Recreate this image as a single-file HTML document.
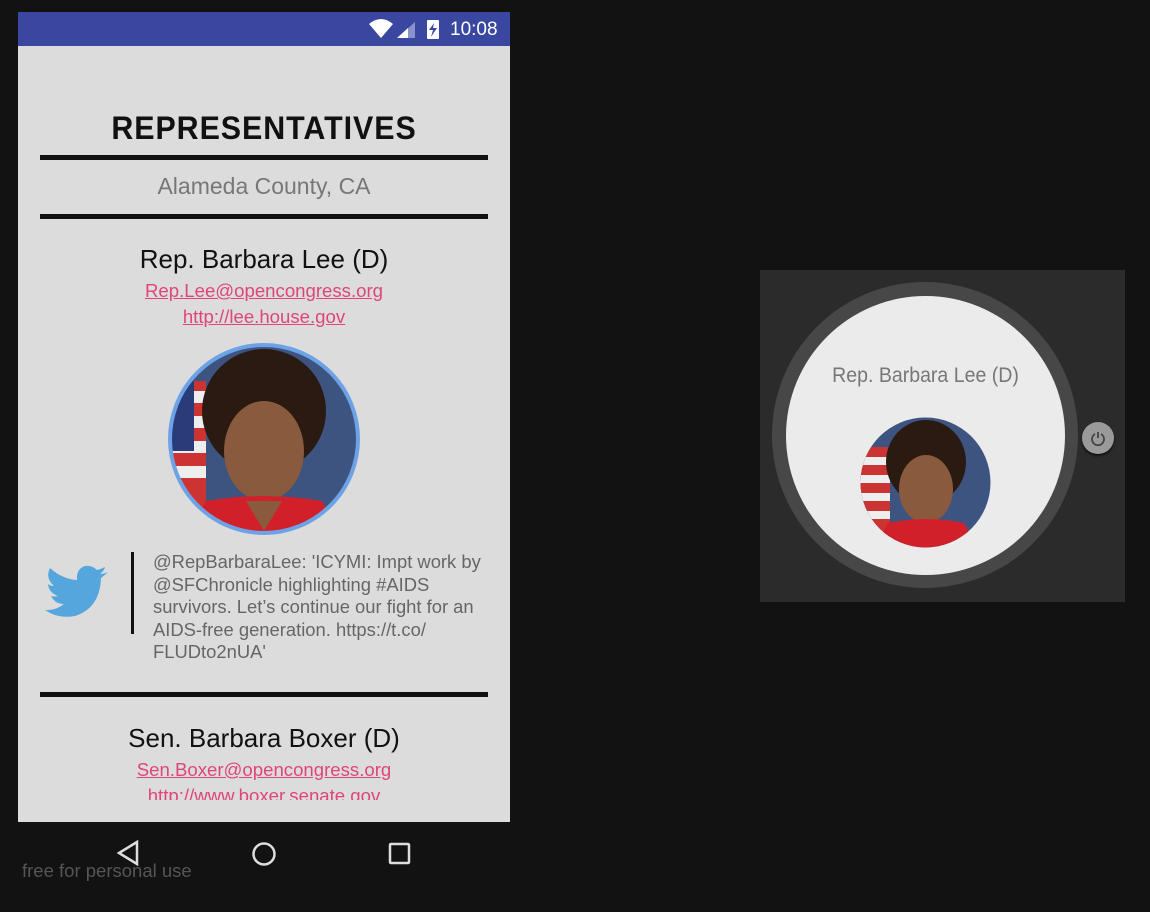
<!DOCTYPE html>
<html><head><meta charset="utf-8"><style>
body{margin:0;width:1150px;height:912px;background:#121212;position:relative;overflow:hidden;font-family:"Liberation Sans",sans-serif}
.a{position:absolute}
#scr{left:18px;top:12px;width:492px;height:810px;background:#dcdcdc;overflow:hidden}
#sb{left:0;top:0;width:492px;height:34px;background:#3a47a0}
.c{left:0;width:492px;text-align:center}
.rule{left:22px;width:448px;height:5px;background:#111}
.lnk{color:#e0457a;text-decoration:underline;font-size:18.6px}
</style></head><body>
<div id="scr" class="a">
 <div id="sb" class="a">
  <svg class="a" style="left:350px;top:6px" width="80" height="24"><path d="M1 6 Q13 -4 25 6 L13 20Z" fill="#fff"/><path d="M29 20 L47 4 L47 20Z" fill="#8a92cc"/><path d="M29 20 L40 10 L40 20Z" fill="#fff"/><rect x="59" y="2" width="12" height="19" rx="1" fill="#fff"/><path d="M66 5 L61 12 L65 12 L63 19 L69 10 L65 10Z" fill="#3a47a0"/></svg>
  <div class="a" style="left:432px;top:7px;color:#fff;font-size:19px">10:08</div>
 </div>
 <div class="a c" style="top:98px;font-size:32px;font-weight:bold;letter-spacing:1px;color:#111;transform:scaleX(0.95)">REPRESENTATIVES</div>
 <div class="a rule" style="top:143px"></div>
 <div class="a c" style="top:161px;font-size:23px;color:#777">Alameda County, CA</div>
 <div class="a rule" style="top:202px"></div>
 <div class="a c" style="top:232px;font-size:26px;color:#111">Rep. Barbara Lee (D)</div>
 <div class="a c lnk" style="top:268px">Rep.Lee@opencongress.org</div>
 <div class="a c lnk" style="top:294px">http://lee.house.gov</div>
 <svg class="a" style="left:148px;top:329px" width="196" height="196">
  <defs><clipPath id="cp"><circle cx="98" cy="98" r="94"/></clipPath></defs>
  <g clip-path="url(#cp)">
   <rect width="196" height="196" fill="#3d5480"/>
   <rect x="0" y="40" width="40" height="140" fill="#c33"/>
   <rect x="0" y="50" width="40" height="12" fill="#eee"/><rect x="0" y="75" width="40" height="12" fill="#eee"/><rect x="0" y="100" width="40" height="12" fill="#eee"/><rect x="0" y="125" width="40" height="12" fill="#eee"/>
   <rect x="0" y="40" width="28" height="70" fill="#2a3b7a"/>
   <ellipse cx="98" cy="70" rx="62" ry="62" fill="#2a1a12"/>
   <ellipse cx="98" cy="110" rx="40" ry="50" fill="#8a5a3e"/>
   <path d="M20 196 L40 160 Q98 150 156 160 L176 196Z" fill="#d2202a"/>
   <path d="M80 160 L98 190 L116 160Z" fill="#8a5a3e"/>
  </g>
  <circle cx="98" cy="98" r="94" fill="none" stroke="#6da2e6" stroke-width="4"/>
 </svg>
 <svg class="a" style="left:26px;top:552px" width="66" height="58"><path d="M64 8 Q60 10 56 10 Q60 7 61 3 Q57 5 53 6 Q48 1 41 2 Q32 5 33 16 Q18 15 6 4 Q1 14 10 22 Q6 22 4 20 Q5 29 14 32 Q10 33 7 32 Q11 40 20 40 Q11 47 1 46 Q14 55 31 52 Q56 44 57 14 Q61 11 64 8Z" fill="#55a6dd"/></svg>
 <div class="a" style="left:113px;top:540px;width:3px;height:82px;background:#111"></div>
 <div class="a" style="left:135px;top:539px;width:338px;font-size:18.4px;line-height:22.5px;color:#666">@RepBarbaraLee: 'ICYMI: Impt work by @SFChronicle highlighting #AIDS survivors. Let’s continue our fight for an AIDS-free generation. https://t.co/ FLUDto2nUA'</div>
 <div class="a rule" style="top:680px"></div>
 <div class="a" style="left:0;top:700px;width:492px;height:88px;overflow:hidden">
  <div class="a c" style="top:11px;font-size:26px;color:#111">Sen. Barbara Boxer (D)</div>
  <div class="a c lnk" style="top:47px">Sen.Boxer@opencongress.org</div>
  <div class="a c lnk" style="top:73px">http://www.boxer.senate.gov</div>
 </div>
</div>
<svg class="a" style="left:110px;top:838px" width="310" height="32"><path d="M27 4 L9 15 L27 26Z" fill="none" stroke="#ddd" stroke-width="2.5"/><circle cx="154" cy="16" r="10.5" fill="none" stroke="#ddd" stroke-width="2.5"/><rect x="280" y="6" width="19" height="19" rx="1" fill="none" stroke="#ddd" stroke-width="2.5"/></svg>
<div class="a" style="left:22px;top:860px;color:#555;font-size:18.5px">free for personal use</div>
<div class="a" style="left:760px;top:270px;width:365px;height:332px;background:#2b2b2b"></div>
<div class="a" style="left:772px;top:282px;width:306px;height:306px;border-radius:50%;background:#474747"></div>
<div class="a" style="left:786px;top:296px;width:279px;height:279px;border-radius:50%;background:#ebebeb"></div>
<div class="a" style="left:786px;top:364px;width:279px;text-align:center;color:#777;font-size:21px;transform:scaleX(0.93)">Rep. Barbara Lee (D)</div>
<svg class="a" style="left:860px;top:417px" width="131" height="131">
 <defs><clipPath id="cp2"><circle cx="65.5" cy="65.5" r="65"/></clipPath></defs>
 <g clip-path="url(#cp2)">
  <rect width="131" height="131" fill="#3d5480"/>
  <rect x="0" y="30" width="30" height="100" fill="#c33"/>
  <rect x="0" y="40" width="30" height="8" fill="#eee"/><rect x="0" y="58" width="30" height="8" fill="#eee"/><rect x="0" y="76" width="30" height="8" fill="#eee"/><rect x="0" y="94" width="30" height="8" fill="#eee"/>
  <ellipse cx="66" cy="45" rx="40" ry="42" fill="#2a1a12"/>
  <ellipse cx="66" cy="72" rx="27" ry="34" fill="#8a5a3e"/>
  <path d="M14 131 L28 106 Q66 98 104 106 L118 131Z" fill="#d2202a"/>
 </g>
</svg>
<div class="a" style="left:1082px;top:422px;width:32px;height:32px;border-radius:50%;background:#9a9a9a;box-shadow:0 2px 2px #111"></div>
<svg class="a" style="left:1090px;top:430px" width="16" height="16"><path d="M5 4 A6 6 0 1 0 11 4" fill="none" stroke="#444" stroke-width="1.8"/><path d="M8 2 V8" stroke="#444" stroke-width="1.8"/></svg>
</body></html>
